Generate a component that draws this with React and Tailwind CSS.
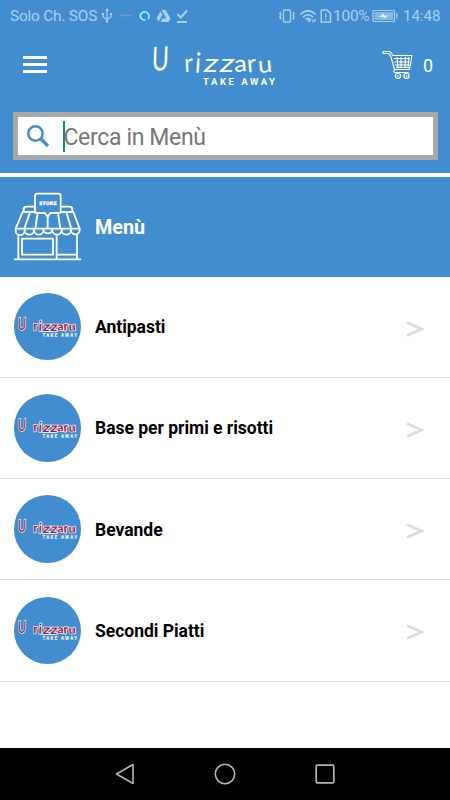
import { useState } from 'react'

const categories = ['Antipasti', 'Base per primi e risotti', 'Bevande', 'Secondi Piatti']

// uneven hand lettering: every glyph has its own slant, width and weight
const letters = [
  { ch: 'r', place: 'translate(32.500 25) rotate(-3) scale(0.9 0.950)', weight: 400 },
  { ch: 'i', place: 'translate(42.500 25.500) rotate(4) scale(0.9 1.050)', weight: 400 },
  { ch: 'z', place: 'translate(50.500 25) skewX(-10) scale(1.200 0.950)', weight: 400 },
  { ch: 'z', place: 'translate(66.500 25) skewX(-10) scale(1.200 0.950)', weight: 400 },
  { ch: 'a', place: 'translate(82.500 25) rotate(-4) scale(0.950 0.850)', weight: 400 },
  { ch: 'r', place: 'translate(95.500 25.500) rotate(-5) scale(0.950 0.920)', weight: 400 },
  { ch: 'u', place: 'translate(106.500 26) rotate(-5) scale(0.950 0.860)', weight: 400 },
]

function Logo({ className, outlined }) {
  const ink = outlined ? '#9a1a3c' : '#ffffff'
  const stroke = outlined ? 3 : 0
  return (
    <svg viewBox="0 0 125 40" className={className} preserveAspectRatio="none" overflow="visible">
      <g
        fontFamily="Lato, sans-serif"
        fill={ink}
        stroke="#ffffff"
        strokeWidth={stroke}
        paintOrder="stroke"
      >
        <text
          transform="translate(-0.500 24) rotate(-3) skewX(-5) scale(0.680 0.980)"
          fontSize="34"
          fontWeight="400"
        >
          U
        </text>
        <g fontSize="27">
          {letters.map((l, i) => (
            <text key={i} transform={l.place} fontWeight={outlined ? 700 : l.weight}>{l.ch}</text>
          ))}
        </g>
      </g>
      <text
        x="51"
        y="37.500"
        fontFamily="Roboto, sans-serif"
        fontWeight="700"
        fontSize="9.500"
        fill="#ffffff"
        textLength="72"
      >
        TAKE AWAY
      </text>
    </svg>
  )
}

function StatusBar() {
  return (
    <div className="flex h-8 items-center justify-between pl-[10px] pr-[10px] text-base text-[#a9d2f1]">
      <div className="flex items-center">
        <span className="w-[88px] whitespace-nowrap pt-[2px] text-[15.4px] tracking-[-0.2px]">Solo Ch. SOS</span>
        {/* usb, shop, share, drive, done */}
        <svg width="94" height="16" viewBox="0 0 94 16" fill="none" stroke="currentColor" strokeWidth="1.2">
          <path d="M9 2v11M5 6v3l4 2.5L13 9V6" />
          <path d="M9 0l2 3H7z M4 5h2v2H4z M12 5h2v2h-2z" fill="currentColor" stroke="none" />
          <circle cx="9" cy="13.5" r="1.3" fill="currentColor" stroke="none" />
          <path d="M21.500 6l1 2 1-2M25 7.500h8" stroke="#8598b8" strokeWidth="1.300" />
          <circle cx="46.500" cy="8" r="6.500" fill="#2590ef" stroke="none" />
          <path d="M43 10.500a4.300 4.300 0 1 1 7 .5M42.500 5.500c-1 4 2 7 5 6.500" stroke="#c4edff" strokeWidth="1.500" />
          <path d="M63.500 2h4l5 8.500h-4z M62.500 3.500l2 3.500-4 6.500-2-3.500z M64.500 10.500h8l-2 3.500h-8z" fill="currentColor" stroke="none" />
          <path d="M79.500 6l3.200 3.500 6.300-7M79 14h10" strokeWidth="2" />
        </svg>
      </div>
      <div className="flex items-center">
        <svg width="56" height="16" viewBox="0 0 56 16" fill="none" stroke="currentColor" strokeWidth="1.300">
          <rect x="5.500" y="2" width="7" height="12" rx="1" />
          <path d="M3 4l-1.200 1.500L3 7 1.800 8.500 3 10l-1.200 1.500M15 4l1.200 1.500L15 7l1.200 1.500L15 10l1.200 1.500" />
          <path d="M22.500 6.500c4.500-4.800 10.500-4.800 15 0M25 9.200c3-3.300 7-3.300 10 0M27.500 11.500c1.500-1.700 3.500-1.700 5 0" strokeWidth="1.600" />
          <path d="M30 12l1.500 1.500 1-1.500zM35 11.500v3M37 11v3" />
          <path d="M44 2h5l3.500 3.500v8.500H43.200V3z M47.800 5.500v4M47.800 10.800v1.500" strokeWidth="1.500" />
        </svg>
        <span className="ml-[-1px] w-[39px] whitespace-nowrap pt-[2px] text-[15.4px] tracking-[-0.2px]">100%</span>
        <svg width="27" height="14" viewBox="0 0 27 14" fill="none" stroke="currentColor">
          <rect x="1" y="1.500" width="21.500" height="11" rx="1" strokeWidth="1.200" />
          <rect x="2.500" y="3" width="18.500" height="8" fill="#83bae4" stroke="none" />
          <path d="M6.500 8l5.500-3.500v2h5L11.500 10V8z" fill="#d7f2ff" stroke="none" />
          <path d="M24.800 4.500v5" strokeWidth="1.300" />
        </svg>
        <span className="ml-[4px] w-[37px] whitespace-nowrap text-[15px]">14:48</span>
      </div>
    </div>
  )
}

function CartIcon() {
  return (
    <svg width="32" height="30" viewBox="0 0 32 30" fill="none" stroke="#ffffff" strokeWidth="1.150">
      <path d="M1 1.500h7l3 4h19l-2.500 14H12.500L9 7 7 3.500H1z" strokeLinejoin="round" />
      <path d="M12 8.500h16M12.500 12h15M13 15h14.500M14 17.500h13M15 7l1 11M19 7v11M23.500 7l-.5 11M27 7l-1 11" />
      <path d="M13 19.500c-2 1-1.500 3 .5 3h13" />
      <circle cx="16" cy="25.800" r="2.600" />
      <circle cx="24.500" cy="25.800" r="2.600" />
      <path d="M16 25v1.500M24.500 25v1.500" />
    </svg>
  )
}

function StoreIcon() {
  return (
    <svg
      className="h-[72px] w-[72px] shrink-0"
      viewBox="36 33 216 216"
      fill="none"
      stroke="#ffffff"
      strokeWidth="5.500"
      strokeLinejoin="round"
    >
      <path d="M105 96V48q0-7 7-7h63q7 0 7 7v48q0 3-3 3h-28l-8 11-8-11h-27q-3 0-3-3z" />
      <path d="M105 80H79q-7 0-8 7v9M182 80h27q7 0 8 7v9" />
      <path d="M105 96H68L47 146h192L220 96h-37M90 97l-17 49M113 99l-7 47M143 108v38M174 99l7 47M199 97l15 49" />
      <path d="M47 147v5a13 13 0 0 0 27 0v-5M74 150a14 14 0 0 0 28 0v-3M102 150a14 14 0 0 0 28 0v-3M130 150a14 14 0 0 0 27 0v-3M157 150a14 14 0 0 0 28 0v-3M185 150a14 14 0 0 0 28 0v-3M213 150a13 13 0 0 0 26 0v-4" />
      <path d="M55 164v73M231 164v73M42 238h201M66 176h93v48H66zM170 166v70M170 224h61" />
      <text
        x="117"
        y="75"
        fill="#ffffff"
        stroke="#ffffff"
        strokeWidth="0.800"
        fontFamily="DejaVu Sans, sans-serif"
        fontWeight="700"
        fontSize="14"
        textLength="53"
        lengthAdjust="spacingAndGlyphs"
      >
        STORE
      </text>
    </svg>
  )
}

function CategoryRow({ name }) {
  return (
    <button className="flex h-[101.25px] w-full items-center border-b-[1.500px] border-[#dedede] pl-[13.500px] pr-[26px] text-left">
      <span className="flex h-[67.500px] w-[67.500px] shrink-0 items-center justify-center rounded-full bg-[#428dcf]">
        <Logo outlined className="ml-[2px] mt-[2px] h-[20px] w-[60px]" />
      </span>
      <span className="ml-[14px] flex-1 pt-[1px] text-[17.500px] font-bold tracking-[-0.02px] text-black">{name}</span>
      <svg className="mt-[4px]" width="18" height="18" viewBox="0 0 18 18" fill="none" stroke="#dddddd" strokeWidth="3">
        <path d="M1 2.500l14.500 6.500L1 15.500" />
      </svg>
    </button>
  )
}

function NavBar() {
  return (
    <div className="flex h-[52.500px] items-center justify-between bg-black pl-[114px] pr-[113px]">
      {/* back, home, recents */}
      <svg width="22" height="24" viewBox="0 0 22 24" fill="none" stroke="#b5b5b5" strokeWidth="1.600">
        <path d="M19 2.500v19L2.500 12z" strokeLinejoin="round" />
      </svg>
      <svg width="24" height="24" viewBox="0 0 24 24" fill="none" stroke="#b5b5b5" strokeWidth="1.600">
        <circle cx="12" cy="12" r="9.700" />
      </svg>
      <svg width="24" height="24" viewBox="0 0 24 24" fill="none" stroke="#b5b5b5" strokeWidth="1.700">
        <rect x="3.200" y="3.200" width="17.600" height="17.600" rx="1" />
      </svg>
    </div>
  )
}

export default function App() {
  const [query, setQuery] = useState('')

  return (
    <div className="flex h-[800px] w-[450px] flex-col overflow-hidden bg-white font-['Roboto',sans-serif]">
      <header className="h-[173px] shrink-0 bg-[#428dcf]">
        <StatusBar />
        <div className="flex h-[80px] items-start pl-[23px] pr-[17px]">
          <button className="mt-[24px] flex w-6 flex-col gap-[4px]">
            <span className="h-[3px] w-6 bg-white" />
            <span className="h-[3px] w-6 bg-white" />
            <span className="h-[3px] w-6 bg-white" />
          </button>
          <Logo className="ml-[105px] mt-[15px] h-[40px] w-[125px]" />
          <div className="ml-auto mt-[18px] flex items-center gap-[9px] text-[18px] text-white">
            <CartIcon />
            <span>0</span>
          </div>
        </div>
        <div className="mx-[12.500px] flex h-[48px] items-center border-[5px] border-[#a9a9a9] bg-white pl-[8px]">
          <svg width="24" height="24" viewBox="0 0 24 24" fill="none" stroke="#428dcf" strokeWidth="2.500">
            <circle cx="9.500" cy="9.500" r="7.200" />
            <path d="M14.500 14.500l7.500 7.500" strokeWidth="3.200" />
          </svg>
          <span className="ml-[13px] h-[31px] w-[2px] bg-[#178f78]" />
          <input
            className="-ml-[1px] min-w-0 flex-1 bg-transparent pt-[4px] text-[23px] tracking-[-0.35px] text-black outline-none placeholder:text-[#777777]"
            placeholder="Cerca in Menù"
            value={query}
            onChange={(e) => setQuery(e.target.value)}
          />
        </div>
      </header>

      <div className="mt-[3.500px] flex h-[100px] shrink-0 items-center bg-[#428dcf] pl-[12px]">
        <StoreIcon />
        <h1 className="ml-[11px] pt-[2px] text-[19.800px] font-bold text-white">Menù</h1>
      </div>

      <main className="flex-1">
        {categories.map((name) => (
          <CategoryRow key={name} name={name} />
        ))}
      </main>

      <NavBar />
    </div>
  )
}
